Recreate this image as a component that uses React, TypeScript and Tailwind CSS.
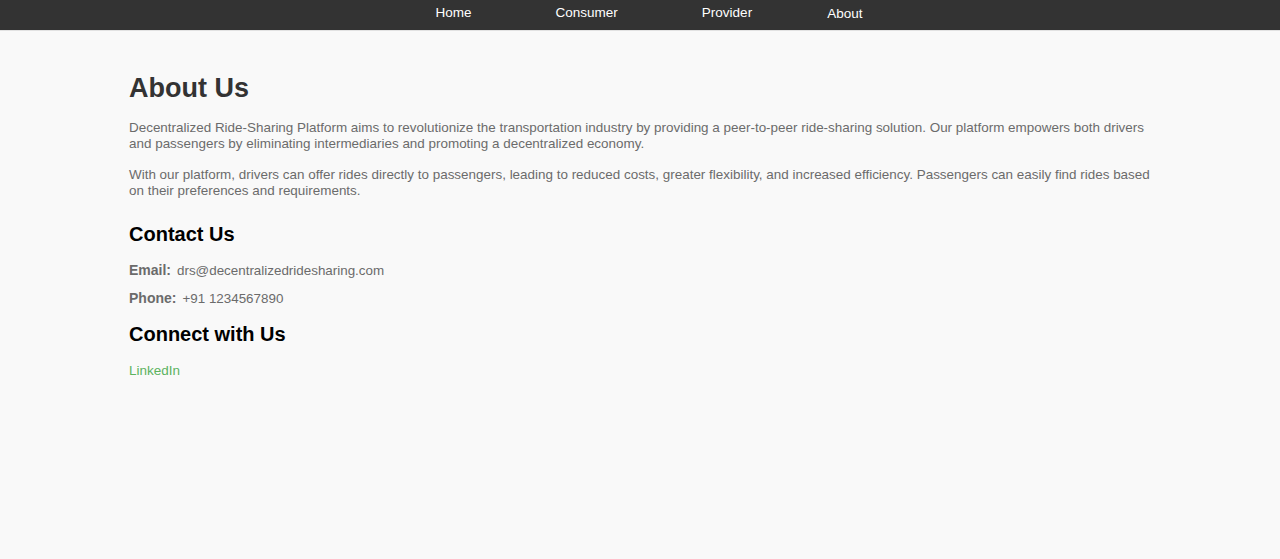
export default function App() {
  return (
    <div className="min-h-[559px] bg-[#f9f9f9] font-['Liberation_Sans',Arial,sans-serif]">
      {/* Top navigation */}
      <nav className="h-[31px] bg-[#333333] border-b border-[#e2e2e2]">
        <ul className="flex h-[30px] items-center justify-center pl-[18px] text-[13.5px] text-white">
          <li className="-mt-[3px]">Home</li>
          <li className="ml-[84px] -mt-[3px]">Consumer</li>
          <li className="ml-[84px] -mt-[3px]">Provider</li>
          <li className="ml-[75px] -mt-[1px]">About</li>
        </ul>
      </nav>

      <main className="mx-auto w-[1022px] pt-[41px]">
        <h1 className="text-[27px] leading-[32px] font-bold text-[#333333]">About Us</h1>
        <p className="mt-[16px] text-[13.45px] leading-[16px] text-[#6b6b6b]">
          Decentralized Ride-Sharing Platform aims to revolutionize the transportation industry by providing a
          peer-to-peer ride-sharing solution. Our platform empowers both drivers and passengers by eliminating
          intermediaries and promoting a decentralized economy.
        </p>
        <p className="mt-[15px] text-[13.45px] leading-[16px] text-[#6b6b6b]">
          With our platform, drivers can offer rides directly to passengers, leading to reduced costs, greater
          flexibility, and increased efficiency. Passengers can easily find rides based on their preferences and
          requirements.
        </p>

        <h2 className="mt-[24px] text-[20px] leading-[23px] font-bold text-black">Contact Us</h2>
        <p className="mt-[16px] text-[13.4px] leading-[16px] text-[#6b6b6b]">
          <span className="mr-[6px] text-[14px] font-bold">Email:</span>drs@decentralizedridesharing.com
        </p>
        <p className="mt-[11px] text-[13.4px] leading-[16px] text-[#6b6b6b]">
          <span className="mr-[6px] text-[14px] font-bold">Phone:</span>+91 1234567890
        </p>

        <h2 className="mt-[16px] text-[20px] leading-[23px] font-bold text-black">Connect with Us</h2>
        <a href="#" className="mt-[17px] block text-[13.5px] leading-[16px] text-[#5cb35f]">
          LinkedIn
        </a>
      </main>
    </div>
  )
}
